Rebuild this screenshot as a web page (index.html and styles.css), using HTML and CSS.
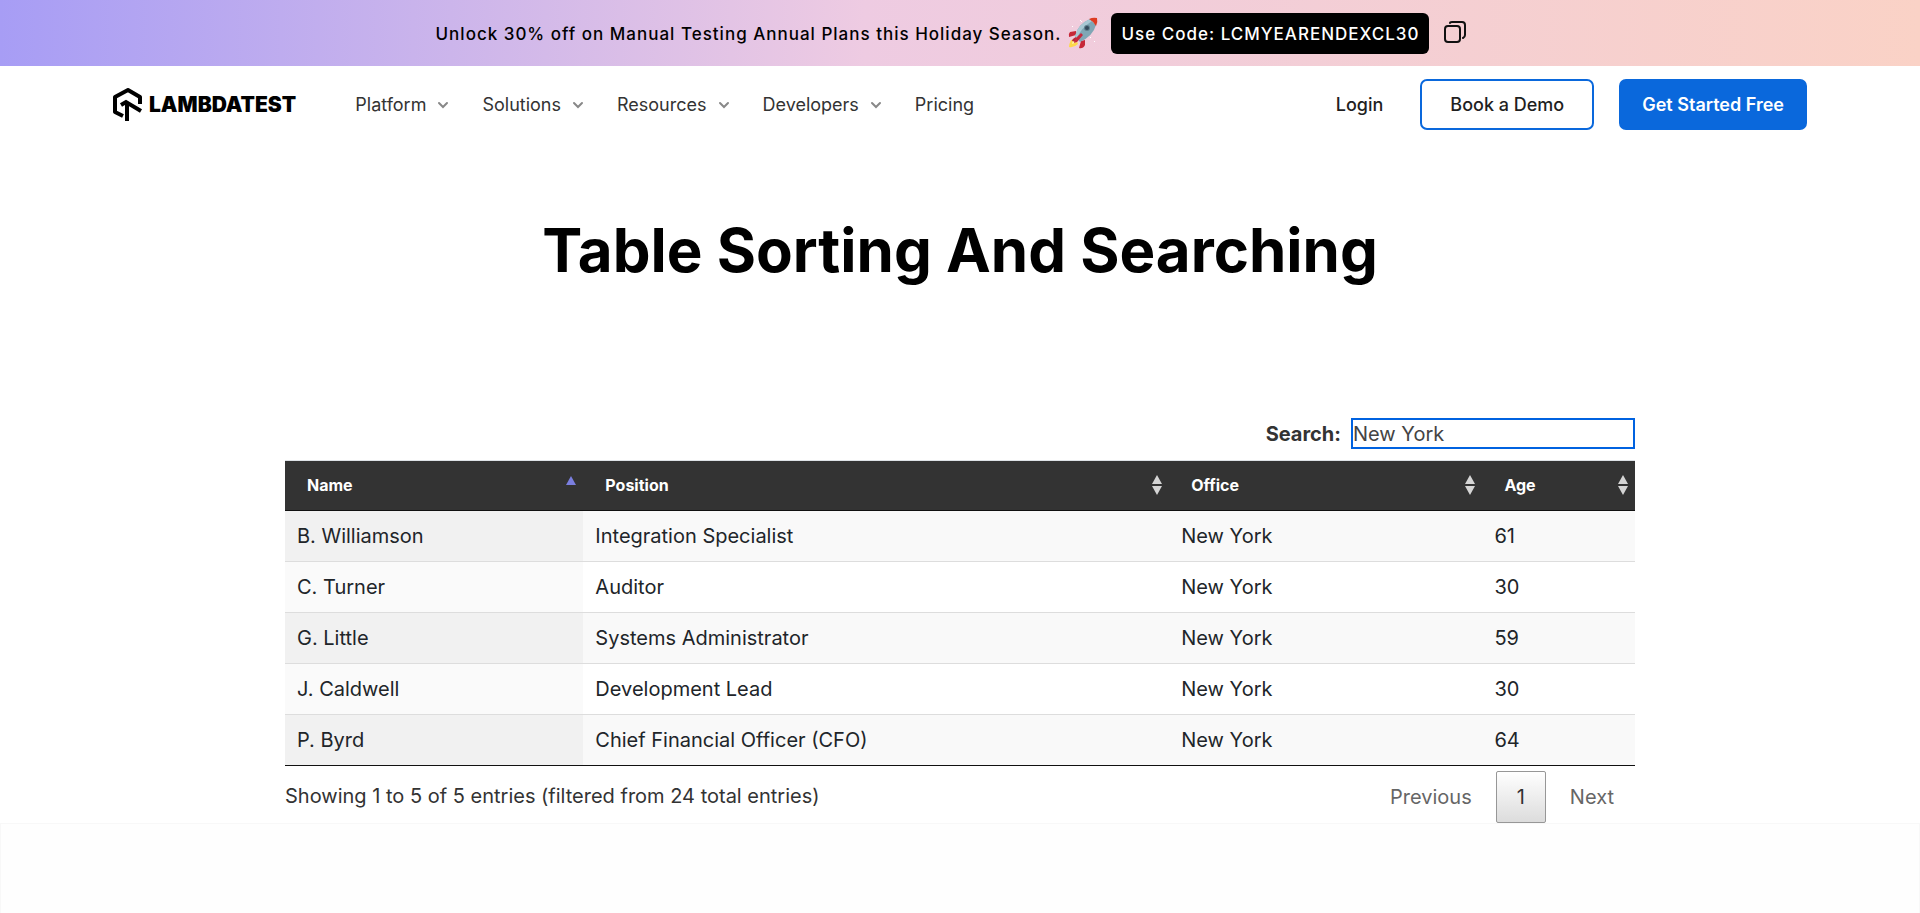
FILE: index.html
```html
<!DOCTYPE html>
<html lang="en">
<head>
<meta charset="utf-8">
<title>Table Sorting And Searching</title>
<link rel="stylesheet" href="styles.css">
</head>
<body>
<div class="promo">
  <span class="promo-text">Unlock 30% off on Manual Testing Annual Plans this Holiday Season.</span>
  <svg class="rocket" viewBox="0 0 30 32" aria-hidden="true">
    <path d="M8 14L2 15Q0 17 1 20L8 18ZM17 23L17 28Q15 32 11 31L13 24Z" fill="#c62838"/>
    <path d="M3 23Q1 27 1 30Q6 31 10 27L8 22Z" fill="#fdd94b"/>
    <path d="M5 23L4 27L9 25Z" fill="#fff3b0"/>
    <path d="M8 20Q4 22 4 24L8 25L11 22Z" fill="#b5283a"/>
    <path d="M7 19Q10 7 22 2L28 8Q25 19 12 25Z" fill="#7fa6b5"/>
    <path d="M7 19Q10 7 22 2L24 4Q13 11 9 21Z" fill="#a8c8d4"/>
    <path d="M21 2Q25 0 29 1Q30 5 28 9Q25 4 21 2Z" fill="#dd3b22"/>
    <path d="M13 16L15 18L9 25L6 26L7 22Z" fill="#c5283c"/>
    <circle cx="19" cy="11" r="3" fill="#5e7f8d"/>
    <circle cx="19" cy="11" r="2" fill="#334a5c"/>
    <path d="M12 3h1v1h-1zM13 4h1v1h-1zM4 9h1v1h-1zM26 24h1v1h-1zM22 20h1v1h-1z" fill="#fff"/>
  </svg>
  <span class="code">Use Code: LCMYEARENDEXCL30</span>
  <button class="copy" aria-label="Copy code">
    <svg viewBox="0 0 22 22" fill="none" stroke="#111" stroke-width="2" stroke-linecap="round" stroke-linejoin="round"><rect x="1" y="5" width="15" height="16" rx="3"/><path d="M6 2Q6 1 8 1H18Q21 1 21 4V14Q21 16 19 17"/></svg>
  </button>
</div>
<header class="header">
  <a class="logo" href="#">
    <svg viewBox="0 0 30 33" fill="none" stroke="#000" stroke-width="4" stroke-linejoin="round"><path d="M10 28L2 24V9L15 2L27 9V16"/><path d="M8 17L13 14L28 23" stroke-linejoin="miter"/><path d="M14 33V15"/></svg>
    <span>LAMBDATEST</span>
  </a>
  <nav class="nav">
    <a href="#">Platform <svg viewBox="0 0 12 8"><path d="M2 2L6 6L10 2"/></svg></a>
    <a href="#">Solutions <svg viewBox="0 0 12 8"><path d="M2 2L6 6L10 2"/></svg></a>
    <a href="#">Resources <svg viewBox="0 0 12 8"><path d="M2 2L6 6L10 2"/></svg></a>
    <a href="#">Developers <svg viewBox="0 0 12 8"><path d="M2 2L6 6L10 2"/></svg></a>
    <a href="#">Pricing</a>
  </nav>
  <div class="actions">
    <a class="login" href="#">Login</a>
    <button class="btn outline">Book a Demo</button>
    <button class="btn solid">Get Started Free</button>
  </div>
</header>
<main>
  <h1>Table Sorting And Searching</h1>
  <section class="data">
    <div class="search"><label for="q">Search:</label><input id="q" type="text" value="New York"></div>
    <table>
      <colgroup><col class="c-name"><col class="c-position"><col class="c-office"><col class="c-age"></colgroup>
      <thead><tr>
        <th><div class="th">Name <svg class="sort asc" viewBox="0 0 12 20"><path d="M6 1L11 10H1Z"/></svg></div></th>
        <th><div class="th">Position <svg class="sort" viewBox="0 0 12 20"><path d="M6 0L11 9H1ZM1 11H11L6 20Z"/></svg></div></th>
        <th><div class="th">Office <svg class="sort" viewBox="0 0 12 20"><path d="M6 0L11 9H1ZM1 11H11L6 20Z"/></svg></div></th>
        <th><div class="th">Age <svg class="sort" viewBox="0 0 12 20"><path d="M6 0L11 9H1ZM1 11H11L6 20Z"/></svg></div></th>
      </tr></thead>
      <tbody>
        <tr><td>B. Williamson</td><td>Integration Specialist</td><td>New York</td><td>61</td></tr>
        <tr><td>C. Turner</td><td>Auditor</td><td>New York</td><td>30</td></tr>
        <tr><td>G. Little</td><td>Systems Administrator</td><td>New York</td><td>59</td></tr>
        <tr><td>J. Caldwell</td><td>Development Lead</td><td>New York</td><td>30</td></tr>
        <tr><td>P. Byrd</td><td>Chief Financial Officer (CFO)</td><td>New York</td><td>64</td></tr>
      </tbody>
    </table>
    <div class="foot">
      <span>Showing 1 to 5 of 5 entries (filtered from 24 total entries)</span>
      <div class="pages"><button class="page" disabled>Previous</button><button class="page current">1</button><button class="page" disabled>Next</button></div>
    </div>
  </section>
</main>
<footer class="bottom"></footer>
</body>
</html>
```
FILE: styles.css
```css
* { box-sizing: border-box; }
body {
  margin: 0;
  min-height: 100vh;
  display: flex;
  flex-direction: column;
  background: #fff;
  color: #333;
  font: 20px/30px Inter, sans-serif;
}
a { color: inherit; text-decoration: none; }
button { font: inherit; cursor: pointer; }
svg { display: block; flex: none; }

.promo {
  height: 66px;
  display: flex;
  align-items: center;
  justify-content: center;
  padding-right: 18px;
  background: linear-gradient(90deg, #a79df5 0%, #eecbe2 45%, #fad2c6 100%);
  color: #000;
  font-size: 17px;
  font-weight: 500;
  letter-spacing: 1px;
}
.promo-text { padding-top: 2px; }
.rocket { width: 30px; height: 32px; margin: 0 13px 0 7px; }
.code {
  padding: 6px 10px 5px;
  border-radius: 6px;
  background: #000;
  color: #fff;
}
.copy { margin-left: 15px; padding: 0 0 2px; border: 0; background: none; }
.copy svg { width: 22px; height: 22px; }

.header {
  display: flex;
  align-items: center;
  height: 77px;
  padding: 0 113px;
  color: #333;
  font-size: 18px;
}
.logo { display: flex; align-items: center; gap: 6px; color: #000; font-size: 21px; font-weight: 900; }
.logo svg { width: 30px; height: 33px; }
.nav { display: flex; gap: 33px; margin-left: 59px; }
.nav a { display: flex; align-items: center; gap: 11px; }
.nav svg { width: 12px; height: 8px; fill: none; stroke: #888; stroke-width: 2; stroke-linecap: round; }
.actions { display: flex; align-items: center; margin-left: auto; color: #1f1f1f; }
.login { margin-right: 37px; font-weight: 500; }
.btn { height: 51px; border: 2px solid #0a68dc; border-radius: 7px; font-weight: 500; }
.outline { padding: 0 28px; margin-right: 25px; background: #fff; color: #1f1f1f; }
.solid { padding: 0 21px; background: #0a68dc; color: #fff; font-weight: 600; }

h1 {
  margin: 69px 0 0;
  color: #000;
  font-size: 60px;
  line-height: 76px;
  font-weight: 700;
  text-align: center;
}
.data { padding: 0 285px; margin-top: 130px; }
.search { display: flex; justify-content: flex-end; align-items: center; gap: 10px; margin-bottom: 11px; }
.search label { font-weight: 700; }
.search input {
  width: 284px;
  height: 31px;
  padding: 0;
  border: 2px solid #0062e0;
  border-radius: 0;
  outline: 0;
  background: #fff;
  color: #444;
  font: inherit;
}
table { width: 100%; table-layout: fixed; border-collapse: separate; border-spacing: 0; border-top: 1px solid #dee2e6; border-bottom: 1px solid #111; color: #212529; }
.c-name { width: 22.1%; }
.c-position { width: 43.4%; }
.c-office { width: 23.2%; }
.c-age { width: 11.3%; }
th { height: 50px; padding: 0 6px 2px 22px; background: #333; border-bottom: 1px solid #111; color: #fff; font-size: 16px; font-weight: 700; text-align: left; }
.th { display: flex; justify-content: space-between; align-items: center; }
.sort { width: 12px; height: 20px; fill: #d5d5d5; }
.asc { fill: #7b7fe0; }
td { height: 51px; padding: 0 12px; border-bottom: 1px solid #ddd; }
tbody tr:last-child td { height: 50px; border-bottom: 0; }
tbody tr:nth-child(odd) { background: #f9f9f9; }
tbody td:first-child { background: #fafafa; }
tbody tr:nth-child(odd) td:first-child { background: #f1f1f1; }
.foot { display: flex; justify-content: space-between; padding-top: 5px; }
.foot > span { padding-top: 10px; }
.pages { display: flex; gap: 3px; }
.page { height: 52px; padding: 0 20px; border: 1px solid transparent; border-radius: 2px; background: none; color: #666; }
.current { border-color: #979797; background: linear-gradient(#fff, #dcdcdc); color: #333; }
.bottom { flex: 1; border: 1px solid #f8f8f8; border-bottom: 0; background: #fefefe; }
```
